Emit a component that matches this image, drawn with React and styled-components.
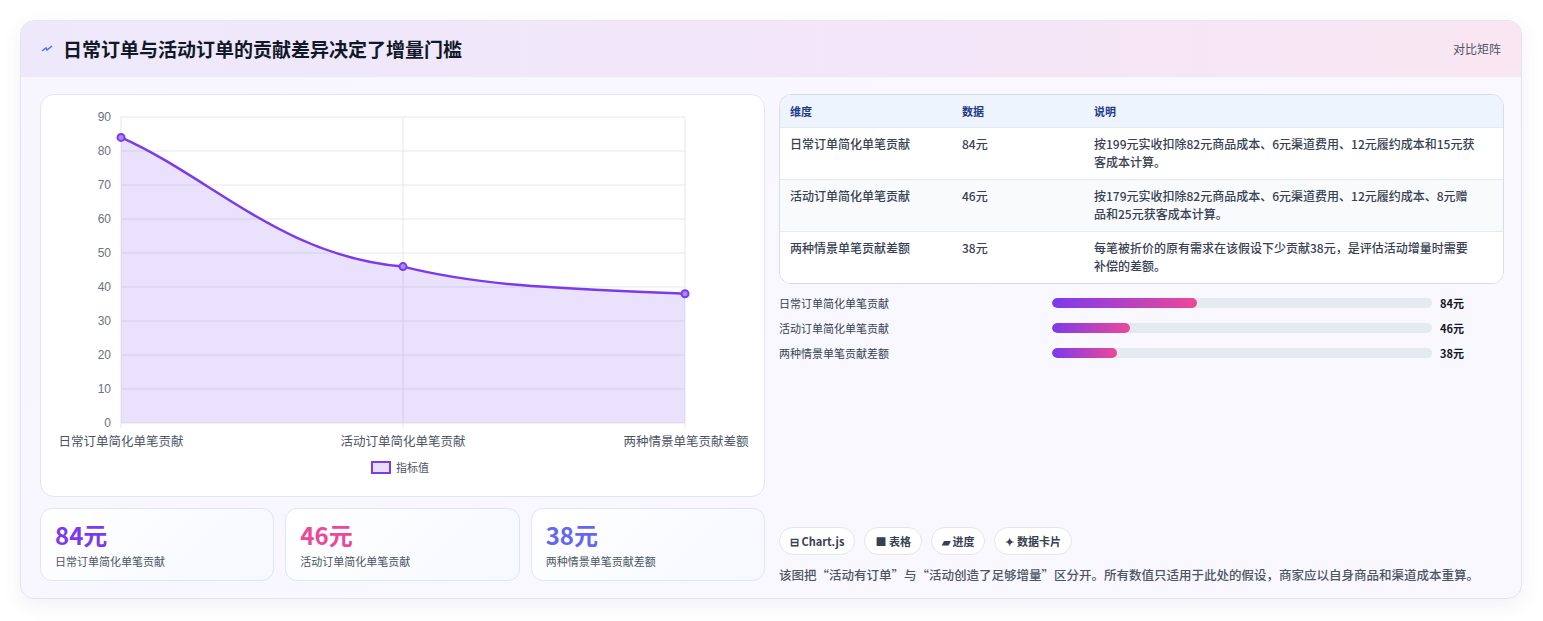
import React from "react";
import styled, { createGlobalStyle } from "styled-components";

const G = createGlobalStyle`
  body{margin:0;background:#fff;font-family:"Noto Sans CJK SC","Noto Sans",sans-serif;}
`;
const Page = styled.div`padding:20px 21px 22px 20px;`;
const Card = styled.div`
  border:1px solid #e2e4f0;border-radius:14px;overflow:hidden;
  background:linear-gradient(135deg,#f7f6fe,#faf8ff);
  box-shadow:0 6px 20px rgba(80,80,140,.08);height:579px;box-sizing:border-box;
`;
const Header = styled.div`
  height:55px;display:flex;align-items:center;justify-content:space-between;padding:0 20px;
  background:linear-gradient(90deg,#ede9fb,#f3e6f8 60%,#fae6f2);border-bottom:1px solid #ece8f6;
`;
const Title = styled.h1`margin:0;font-size:19px;font-weight:700;color:#111827;display:flex;align-items:center;gap:10px;`;
const Tag = styled.span`font-size:12px;color:#4b5563;`;
const Body = styled.div`display:grid;grid-template-columns:725px 725px;gap:14px;padding:17px 19px 0 19px;`;
const Col = styled.div`display:flex;flex-direction:column;`;
const ChartBox = styled.div`background:#fff;border:1px solid #e2e6f0;border-radius:14px;height:403px;box-sizing:border-box;`;
const Stats = styled.div`display:grid;grid-template-columns:repeat(3,1fr);gap:11px;margin-top:11px;`;
const Stat = styled.div`border:1px solid #dfe5f2;border-radius:12px;background:linear-gradient(135deg,#fff,#f6f8fe);height:73px;box-sizing:border-box;padding:10px 14px;`;
const StatV = styled.div`font-size:24px;font-weight:700;color:${p=>p.c};line-height:32px;`;
const StatL = styled.div`font-size:11px;color:#4b5563;margin-top:2px;`;
const Table = styled.div`border:1px solid #d8dde9;border-radius:12px;overflow:hidden;background:#fff;`;
const Row = styled.div`display:grid;grid-template-columns:172px 132px 1fr;padding:${p=>p.h?"7px 24px 7px 10px":"7px 24px 8px 10px"};
  background:${p=>p.h?"#eef4fe":p.alt?"#f8fafc":"#fff"};border-top:${p=>p.first?"none":"1px solid #e5e9f0"};
  font-size:${p=>p.h?11:12}px;line-height:18px;color:${p=>p.h?"#1e3a8a":"#374151"};font-weight:${p=>p.h?700:500};`;
const Bars = styled.div`display:flex;flex-direction:column;gap:6px;margin-top:9px;`;
const BarRow = styled.div`display:grid;grid-template-columns:273px 380px 1fr;align-items:center;font-size:11px;color:#374151;height:19px;`;
const Track = styled.div`height:10px;border-radius:5px;background:#e5e9f0;overflow:hidden;`;
const Fill = styled.div`height:100%;border-radius:5px;background:linear-gradient(90deg,#7c3aed,#ec4899);`;
const BarV = styled.span`font-weight:700;color:#111827;padding-left:8px;`;
const Chips = styled.div`display:flex;gap:9px;margin-top:auto;`;
const Chip = styled.span`border:1px solid #e3e6ee;border-radius:14px;padding:5px 10px;font-size:11px;font-weight:700;color:#374151;background:#fff;`;
const Note = styled.p`margin:10px 0 0;font-size:12.5px;color:#4b5563;font-weight:500;`;

const rows=[["日常订单简化单笔贡献","84元","按199元实收扣除82元商品成本、6元渠道费用、12元履约成本和15元获客成本计算。"],
["活动订单简化单笔贡献","46元","按179元实收扣除82元商品成本、6元渠道费用、12元履约成本、8元赠品和25元获客成本计算。"],
["两种情景单笔贡献差额","38元","每笔被折价的原有需求在该假设下少贡献38元，是评估活动增量时需要补偿的差额。"]];

function Chart(){
  const x0=80,x1=644,y0=328,k=3.4;
  const ys=[84,46,38].map(v=>y0-v*k); const xs=[x0,362,x1];
  const path=`M${xs[0]},${ys[0]} C${xs[0]+90},${ys[0]+40} ${xs[1]-120},${ys[1]-10} ${xs[1]},${ys[1]} C${xs[1]+80},${ys[1]+20} ${xs[2]-120},${ys[2]-5} ${xs[2]},${ys[2]}`;
  return <svg width="723" height="401" style={{display:"block"}} fontFamily="Liberation Sans,sans-serif">
    {Array.from({length:10},(_,i)=>{const y=y0-i*10*k;return <g key={i}>
      <line x1={x0} x2={x1} y1={y} y2={y} stroke="#e5e7eb"/>
      <text x={x0-10} y={y+4} fontSize="12" fill="#6b7280" textAnchor="end">{i*10}</text></g>})}
    {xs.map((x,i)=><line key={i} x1={x} x2={x} y1={22} y2={y0+5} stroke="#e5e7eb"/>)}
    <path d={path+` L${x1},${y0} L${x0},${y0} Z`} fill="rgba(139,92,246,.18)"/>
    <path d={path} fill="none" stroke="#7c3aed" strokeWidth="2.5"/>
    {xs.map((x,i)=><circle key={i} cx={x} cy={ys[i]} r="3.5" fill="#a78bfa" stroke="#7c3aed" strokeWidth="2"/>)}
    <g fontFamily="Noto Sans CJK SC,sans-serif" fontSize="12.5" fill="#4b5563">
      <text x={x0} y={351} textAnchor="middle">日常订单简化单笔贡献</text>
      <text x={362} y={351} textAnchor="middle">活动订单简化单笔贡献</text>
      <text x={645} y={351} textAnchor="middle">两种情景单笔贡献差额</text>
      <rect x="331" y="367" width="18" height="11" fill="rgba(139,92,246,.2)" stroke="#7c3aed" strokeWidth="2"/>
      <text x="355" y="377" fontSize="11">指标值</text>
    </g>
  </svg>;
}

export default function App(){
  return <Page><G/><Card>
    <Header><Title><svg width="12" height="8" viewBox="0 0 12 8"><path d="M1 6 L5 3 L6 5 L11 1" stroke="#4f6df5" strokeWidth="1.5" fill="none"/></svg>日常订单与活动订单的贡献差异决定了增量门槛</Title><Tag>对比矩阵</Tag></Header>
    <Body>
      <Col>
        <ChartBox><Chart/></ChartBox>
        <Stats>
          <Stat><StatV c="#7c3aed">84元</StatV><StatL>日常订单简化单笔贡献</StatL></Stat>
          <Stat><StatV c="#ec4899">46元</StatV><StatL>活动订单简化单笔贡献</StatL></Stat>
          <Stat><StatV c="#6366f1">38元</StatV><StatL>两种情景单笔贡献差额</StatL></Stat>
        </Stats>
      </Col>
      <Col style={{height:490}}>
        <Table>
          <Row h first><span>维度</span><span>数据</span><span>说明</span></Row>
          {rows.map((r,i)=><Row key={i} alt={i%2===1}><span>{r[0]}</span><span>{r[1]}</span><span>{r[2]}</span></Row>)}
        </Table>
        <Bars>
          {[["日常订单简化单笔贡献",84,145],["活动订单简化单笔贡献",46,78],["两种情景单笔贡献差额",38,65]].map(b=>
            <BarRow key={b[0]}><span>{b[0]}</span><Track><Fill style={{width:b[2]}}/></Track><BarV>{b[1]}元</BarV></BarRow>)}
        </Bars>
        <Chips><Chip>⊟ Chart.js</Chip><Chip>■ 表格</Chip><Chip>▰ 进度</Chip><Chip>✦ 数据卡片</Chip></Chips>
        <Note>该图把“活动有订单”与“活动创造了足够增量”区分开。所有数值只适用于此处的假设，商家应以自身商品和渠道成本重算。</Note>
      </Col>
    </Body>
  </Card></Page>;
}
